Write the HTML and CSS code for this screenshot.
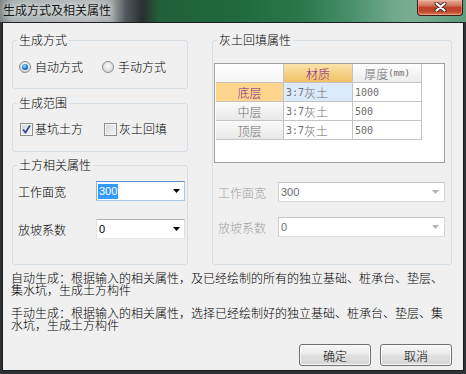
FILE: index.html
```html
<!DOCTYPE html>
<html lang="zh-CN">
<head>
    <meta charset="UTF-8">
    <title>生成方式及相关属性</title>
    <link rel="stylesheet" href="styles.css">
</head>
<body>
    <div class="titlebar">
        <span class="title">生成方式及相关属性</span>
        <button class="close-btn">
            <svg width="13" height="10" viewBox="0 0 13 10">
                <path d="M2.5 1.5 L10.5 8.5 M10.5 1.5 L2.5 8.5" stroke="#3b2a2a" stroke-width="4" stroke-linecap="round"/>
                <path d="M2.5 1.5 L10.5 8.5 M10.5 1.5 L2.5 8.5" stroke="#fff" stroke-width="2.2" stroke-linecap="round"/>
            </svg>
        </button>
    </div>

    <div class="client">
        <div class="top-row">
            <div class="left-col">
                <!-- 生成方式 -->
                <div class="group group-mode">
                    <div class="group-title">生成方式</div>
                    <div class="option-row mode-row">
                        <label class="option"><span class="radio checked"></span>自动方式</label>
                        <label class="option"><span class="radio"></span>手动方式</label>
                    </div>
                </div>

                <!-- 生成范围 -->
                <div class="group group-range">
                    <div class="group-title">生成范围</div>
                    <div class="option-row range-row">
                        <label class="option">
                            <span class="check">
                                <svg width="11" height="11" viewBox="0 0 11 11"><path d="M2 5.5 L4.5 8.5 L9 1.5" fill="none" stroke="#2f4a8c" stroke-width="1.8"/></svg>
                            </span>基坑土方
                        </label>
                        <label class="option"><span class="check"></span>灰土回填</label>
                    </div>
                </div>

                <!-- 土方相关属性 -->
                <div class="group group-soil">
                    <div class="group-title">土方相关属性</div>
                    <div class="field-row row-a">
                        <span class="field-label">工作面宽</span>
                        <div class="combo combo-short focus">
                            <span class="sel">300</span>
                            <svg width="7" height="4" viewBox="0 0 7 4"><path d="M0 0H7L3.5 4Z" fill="#000"/></svg>
                        </div>
                    </div>
                    <div class="field-row row-b">
                        <span class="field-label">放坡系数</span>
                        <div class="combo combo-short">
                            <span class="val">0</span>
                            <svg width="7" height="4" viewBox="0 0 7 4"><path d="M0 0H7L3.5 4Z" fill="#000"/></svg>
                        </div>
                    </div>
                </div>
            </div>

            <!-- 灰土回填属性 -->
            <div class="group group-fill">
                <div class="group-title">灰土回填属性</div>
                <div class="grid-frame">
                    <div class="grid">
                        <div class="cell head corner"></div>
                        <div class="cell head col-head active">材质</div>
                        <div class="cell head col-head">厚度<span class="unit">(mm)</span></div>

                        <div class="cell head row-head active">底层</div>
                        <div class="cell selected"><span class="num">3:7</span>灰土</div>
                        <div class="cell"><span class="num">1000</span></div>

                        <div class="cell head row-head">中层</div>
                        <div class="cell"><span class="num">3:7</span>灰土</div>
                        <div class="cell"><span class="num">500</span></div>

                        <div class="cell head row-head">顶层</div>
                        <div class="cell"><span class="num">3:7</span>灰土</div>
                        <div class="cell"><span class="num">500</span></div>
                    </div>
                </div>
                <div class="field-row fill-a">
                    <span class="field-label">工作面宽</span>
                    <div class="combo combo-wide">
                        <span class="val">300</span>
                        <svg width="7" height="4" viewBox="0 0 7 4"><path d="M0 0H7L3.5 4Z" fill="#b4b4b4"/></svg>
                    </div>
                </div>
                <div class="field-row fill-b">
                    <span class="field-label">放坡系数</span>
                    <div class="combo combo-wide">
                        <span class="val">0</span>
                        <svg width="7" height="4" viewBox="0 0 7 4"><path d="M0 0H7L3.5 4Z" fill="#b4b4b4"/></svg>
                    </div>
                </div>
            </div>
        </div>

        <p class="note">自动生成：根据输入的相关属性，及已经绘制的所有的独立基础、桩承台、垫层、集水坑，生成土方构件</p>
        <p class="note">手动生成：根据输入的相关属性，选择已经绘制好的独立基础、桩承台、垫层、集水坑，生成土方构件</p>

        <div class="buttons">
            <button class="btn">确定</button>
            <button class="btn">取消</button>
        </div>
    </div>
</body>
</html>
```

FILE: styles.css
```css
* {
    box-sizing: border-box;
}

body {
    margin: 0;
    width: 466px;
    height: 374px;
    overflow: hidden;
    background: #2f3234;
    font-family: "Noto Sans CJK SC", sans-serif;
    font-size: 12px;
    font-weight: 300;
    color: #000;
}

/* Title bar */
.titlebar {
    height: 22px;
    display: flex;
    justify-content: space-between;
    align-items: flex-start;
    background: linear-gradient(to right, #7d8282 0, #aab0b0 14px, #b4b8b8 90px, #a2a6a6 112px, #50565a 126px, #2a2f31 142px, #22603a 160px, #1f6b3d 240px, #2a774b 300px, #47906a 350px, #6fa88a 392px, #79ad91 415px, #5e9c7c 466px);
}

.title {
    line-height: 20px;
    padding-left: 3px;
    color: #151515;
    font-weight: 400;
    text-shadow: 0 0 5px #eef2f2, 0 0 9px #dfe3e3;
}

.close-btn {
    width: 46px;
    height: 16px;
    margin-right: 3px;
    padding: 0 0 2px;
    border: 1px solid #3d1a12;
    border-top: 0;
    border-radius: 0 0 4px 4px;
    background: linear-gradient(#e6a894, #d47a62 35%, #c0402a 50%, #c44a2c 80%, #de8a6e);
    box-shadow: inset 0 0 0 1px rgba(255, 215, 195, 0.35);
    display: flex;
    justify-content: center;
    align-items: center;
}

/* Dialog body */
.client {
    margin: 0 2px;
    height: 349px;
    border: 1px solid #1c1c1c;
    background: #f0f0f0;
    padding: 17px 11px 0 8px;
}

.top-row {
    display: flex;
    justify-content: space-between;
    height: 225px;
}

.left-col {
    width: 176px;
    margin-left: 1px;
    display: flex;
    flex-direction: column;
}

.group {
    border: 1px solid #d5dfe5;
    border-radius: 3px;
}

.group-title {
    width: fit-content;
    margin: -8px 0 0 4px;
    padding: 0 2px;
    line-height: 14px;
    background: #f0f0f0;
}

.group-mode {
    height: 49px;
}

.group-range {
    height: 49px;
    margin-top: 14px;
}

.group-soil {
    height: 100px;
    margin-top: 13px;
}

.group-fill {
    width: 240px;
    height: 225px;
}

/* Radios and checkboxes */
.option-row {
    display: flex;
}

.mode-row {
    gap: 19px;
    margin: 13px 0 0 6px;
}

.range-row {
    gap: 21px;
    margin: 12px 0 0 7px;
}

.option {
    display: flex;
    align-items: center;
    gap: 4px;
    line-height: 14px;
}

.range-row .option {
    gap: 2px;
}

.radio {
    width: 12px;
    height: 12px;
    border-radius: 50%;
    border: 1px solid #8a8c8e;
    background: radial-gradient(circle at 50% 40%, #fdfdfd, #d4d4d4 80%);
    display: flex;
    align-items: center;
    justify-content: center;
}

.radio.checked::after {
    content: "";
    width: 6px;
    height: 6px;
    border-radius: 50%;
    background: radial-gradient(circle at 40% 35%, #b4e2ff, #1c7fd0 50%, #0b3f7a);
}

.check {
    width: 13px;
    height: 13px;
    border: 1px solid #8e8f8f;
    background: linear-gradient(135deg, #d3d6da, #f6f6f6);
    box-shadow: inset 0 0 0 1px #f4f4f4;
    display: flex;
    align-items: center;
    justify-content: center;
}

/* Label + combo rows */
.field-row {
    display: flex;
    align-items: center;
    height: 20px;
    padding-left: 5px;
}

.field-label {
    width: 78px;
}

.row-a {
    margin-top: 9px;
}

.row-b {
    margin-top: 18px;
}

.fill-a {
    margin-top: 19px;
}

.fill-b {
    margin-top: 15px;
}

.group-fill .field-label {
    width: 60px;
    color: #a0a0a0;
}

.combo {
    height: 20px;
    border: 1px solid;
    border-color: #abadb3 #dbdfe6 #e3e9ef #e2e3ea;
    background: #fff;
    display: flex;
    align-items: center;
    justify-content: space-between;
    padding: 0 4px 0 1px;
    font-family: "Liberation Sans", sans-serif;
    font-size: 11px;
    font-weight: 400;
}

.combo-short {
    width: 89px;
}

.combo-short .val {
    padding-left: 1px;
}

.combo.focus {
    border-color: #5f93c9 #a8c6e6 #a8c6e6 #8fb6df;
}

.combo-wide {
    width: 167px;
    padding: 0 5px 0 2px;
    color: #6b6b6b;
    border-color: #c6c6c6 #d6d6d6 #d9d9d9 #d0d0d0;
}

.sel {
    background: #3399ff;
    color: #fff;
    padding: 0 1px;
    line-height: 15px;
}

/* Grid */
.grid-frame {
    width: 231px;
    height: 100px;
    margin: 16px 0 0 1px;
    border: 1px solid #a0a0a0;
    background: #fff;
    padding-left: 1px;
}

.grid {
    display: grid;
    grid-template-columns: 68px 69px 69px;
    grid-auto-rows: 19px;
}

.cell {
    border-right: 1px solid #c4c4c4;
    border-bottom: 1px solid #c4c4c4;
    display: flex;
    align-items: center;
    padding-left: 2px;
    color: #6d6d6d;
    white-space: nowrap;
}

.cell.head {
    justify-content: center;
    padding: 0;
}

.corner {
    background: linear-gradient(#fff, #f4f4f4);
}

.col-head {
    background: linear-gradient(#fefefe, #ececec);
}

.col-head.active {
    background: linear-gradient(#fbe4aa, #f2c067);
    color: #7d1d83;
}

.row-head {
    background: linear-gradient(#fbfbfb, #e8e8e8);
}

.row-head.active {
    background: #fdd58c;
    color: #7d1d83;
}

.cell.selected {
    background: #dcebfc;
}

.num {
    font-family: "DejaVu Sans Mono", monospace;
    font-size: 10px;
    font-weight: 400;
}

.unit {
    font-family: "DejaVu Sans Mono", monospace;
    font-size: 9px;
    font-weight: 400;
}

/* Notes */
.note {
    margin: 7px 0 0;
    line-height: 12px;
}

.note + .note {
    margin-top: 11px;
}

/* Buttons */
.buttons {
    display: flex;
    justify-content: flex-end;
    gap: 9px;
    margin-top: 13px;
}

.btn {
    width: 72px;
    height: 22px;
    padding: 0;
    border: 1px solid #707070;
    border-radius: 3px;
    background: linear-gradient(#f6f6f6, #ececec 45%, #e0e0e0 50%, #d6d6d6);
    box-shadow: inset 0 0 0 1px #fbfbfb;
    font: 300 12px "Noto Sans CJK SC", sans-serif;
    color: #000;
}
```
